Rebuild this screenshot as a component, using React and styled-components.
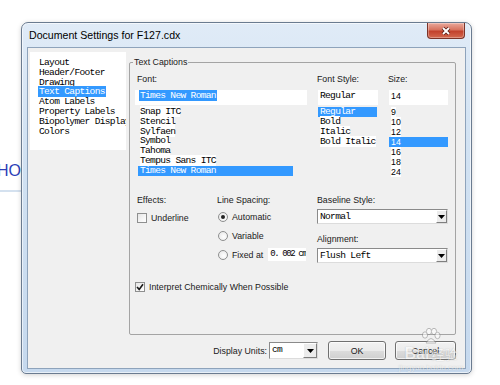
import React from "react";
import styled, { createGlobalStyle } from "styled-components";

const ui = `"Liberation Sans", Arial, sans-serif`;
const mono = `"Liberation Mono", "DejaVu Sans Mono", monospace`;
const pick = "#3399ff";

const GlobalStyle = createGlobalStyle`
  html, body { margin: 0; padding: 0; background: #ffffff; }
  body { width: 500px; height: 385px; overflow: hidden; font-family: ${ui}; }
`;

const Desktop = styled.div`
  position: relative;
  width: 500px;
  height: 385px;
  box-sizing: border-box;
  padding: 22px 0 0 21px;
`;

const PageBehind = styled.div`
  position: absolute;
  left: -3px;
  top: 161px;
  width: 26px;
  height: 29px;
  border-bottom: 2px solid #d4e1ef;
  color: #2d3fb8;
  font: 16px/20px ${ui};
`;

const Window = styled.div`
  position: relative;
  z-index: 1;
  width: 451px;
  height: 352px;
  box-sizing: border-box;
  display: flex;
  flex-direction: column;
  padding: 0 5px 4px;
  border: 1px solid #6a7b90;
  border-radius: 7px 7px 5px 5px;
  background: linear-gradient(180deg, #e0ebf7 0%, #d3e3f3 30%, #c6d9ee 100%);
  box-shadow: inset 0 0 0 1px rgba(255, 255, 255, 0.6), 0 1px 5px rgba(0, 0, 0, 0.18);
`;

const TitleBar = styled.div`
  height: 24px;
  display: flex;
  align-items: flex-start;
  justify-content: space-between;
`;

const Title = styled.span`
  padding: 6px 0 0 2px;
  font: 10.6px/12px ${ui};
  color: #000;
`;

const CloseButton = styled.div`
  width: 38px;
  height: 16px;
  margin-right: 1px;
  box-sizing: border-box;
  display: flex;
  align-items: center;
  justify-content: center;
  border: 1px solid #7b3328;
  border-top: none;
  border-radius: 0 0 4px 4px;
  background: linear-gradient(180deg, #eaa99c 0%, #d7735f 45%, #c2412c 55%, #d3694f 100%);
  box-shadow: inset 0 0 0 1px rgba(255, 255, 255, 0.3);
`;

const Client = styled.div`
  flex: 1;
  display: grid;
  grid-template-columns: 99px 1fr;
  grid-template-rows: 1fr 33px;
  padding: 4px 9px 0 2px;
  background: #f0f0f0;
  border: 1px solid #8ea3bb;
`;

const CategoryList = styled.ul`
  align-self: start;
  height: 92px;
  margin: 0 3px 0 0;
  padding: 6px 0 0 8px;
  list-style: none;
  background: #fff;
  overflow: hidden;
`;

const Row = styled.li`
  font: 9.6px/9.8px ${mono};
  letter-spacing: -0.7px;
  white-space: nowrap;
`;

const Chip = styled.span`
  padding: 0 1px;
  background: ${(p) => (p.$on ? pick : "transparent")};
  color: ${(p) => (p.$on ? "#fff" : "#000")};
`;

const Group = styled.fieldset`
  min-width: 0;
  margin: 5px 0 0;
  padding: 7px 0 0 5px;
  border: 1px solid #a4a4a4;
  border-radius: 2px;
`;

const Legend = styled.legend`
  margin-left: -2px;
  padding: 0 1px;
  font: 8.8px/10px ${ui};
  color: #1a1a1a;
`;

const FontRow = styled.div`
  display: flex;
  gap: 10px;
  align-items: flex-start;
`;

const Column = styled.div`
  width: ${(p) => p.$w}px;
  display: flex;
  flex-direction: column;
`;

const Label = styled.div`
  margin-top: ${(p) => p.$top || 0}px;
  padding-left: ${(p) => p.$indent || 0}px;
  font: 8.8px/10px ${ui};
  color: #1a1a1a;
  white-space: nowrap;
`;

const TextField = styled.div`
  height: 15px;
  margin: 6px 0 0 ${(p) => p.$shift || 0}px;
  padding: 1px 0 0 ${(p) => p.$pad}px;
  box-sizing: border-box;
  background: #fff;
  font: ${(p) => (p.$sans ? `8.8px/10px ${ui}` : `9.6px/10px ${mono}`)};
  letter-spacing: ${(p) => (p.$sans ? "0" : "-0.7px")};
  white-space: nowrap;
`;

const Picked = styled.span`
  padding: 0 1px;
  background: ${pick};
  color: #fff;
`;

const ItemList = styled.div`
  width: ${(p) => p.$w}px;
  margin: 2px 0 0 ${(p) => p.$shift}px;
  font: ${(p) => (p.$sans ? `8.8px/10px ${ui}` : `9.6px/${p.$lh || 10}px ${mono}`)};
  letter-spacing: ${(p) => (p.$sans ? "0" : "-0.7px")};
  white-space: nowrap;
`;

const Item = styled.div`
  padding-left: 2px;
  color: ${(p) => (p.$on ? "#fff" : "#000")};
  background: ${(p) => (p.$on ? pick : "transparent")};
  span {
    background: ${(p) => (p.$on ? "transparent" : "#fff")};
  }
`;

const OptionsRow = styled.div`
  display: flex;
  margin-top: 18px;
  padding-left: 2px;
`;

const CheckRow = styled.label`
  display: flex;
  align-items: center;
  gap: 4px;
  height: 10px;
  margin-top: ${(p) => p.$top}px;
  font: 8.8px/10px ${ui};
  color: #1a1a1a;
  white-space: nowrap;
`;

const CheckBox = styled.span`
  width: 10px;
  height: 10px;
  box-sizing: border-box;
  display: flex;
  align-items: center;
  justify-content: center;
  border: 1px solid #8e8f8f;
  background: linear-gradient(135deg, #e6e6e6 0%, #ffffff 100%);
`;

const RadioGroup = styled.div`
  margin-top: 2px;
  display: flex;
  flex-direction: column;
`;

const RadioRow = styled.label`
  height: 19px;
  display: flex;
  align-items: center;
  gap: 4px;
  padding-left: 1px;
  font: 8.8px/10px ${ui};
  color: #1a1a1a;
  white-space: nowrap;
`;

const RadioDot = styled.span`
  width: 10px;
  height: 10px;
  box-sizing: border-box;
  display: flex;
  align-items: center;
  justify-content: center;
  border: 1px solid #8e8f8f;
  border-radius: 50%;
  background: radial-gradient(circle at 60% 60%, #ffffff 0%, #e4e4e4 100%);
  &::after {
    content: "";
    width: 4px;
    height: 4px;
    border-radius: 50%;
    background: ${(p) => (p.$on ? "#222" : "transparent")};
  }
`;

const NumberField = styled.span`
  width: 38px;
  height: 13px;
  margin-left: 1px;
  padding-left: 2px;
  box-sizing: border-box;
  overflow: hidden;
  background: #fff;
  font: 9px/13px ${mono};
  letter-spacing: -1.4px;
  color: #000;
`;

const Select = styled.div`
  width: ${(p) => p.$w}px;
  height: ${(p) => p.$h || 15}px;
  margin-top: ${(p) => p.$top || 0}px;
  box-sizing: border-box;
  display: flex;
  align-items: stretch;
  border: 1px solid;
  border-color: #8a8a8a #dcdcdc #dcdcdc #8a8a8a;
  background: #fff;
`;

const SelectText = styled.span`
  flex: 1;
  padding-left: 2px;
  font: 9.6px/13px ${mono};
  letter-spacing: -0.7px;
  color: #000;
  white-space: nowrap;
  overflow: hidden;
`;

const ArrowButton = styled.span`
  width: ${(p) => p.$w || 11}px;
  box-sizing: border-box;
  display: flex;
  align-items: center;
  justify-content: center;
  background: #ececec;
  border: 1px solid;
  border-color: #ffffff #7f7f7f #7f7f7f #ffffff;
`;

const ButtonBar = styled.div`
  grid-column: 1 / -1;
  display: flex;
  align-items: center;
  justify-content: flex-end;
  padding-bottom: 2px;
`;

const BarLabel = styled.span`
  margin-right: 2px;
  font: 8.8px/10px ${ui};
  color: #1a1a1a;
`;

const Button = styled.div`
  width: ${(p) => p.$w}px;
  height: 19px;
  margin-left: ${(p) => p.$gap}px;
  box-sizing: border-box;
  display: flex;
  align-items: center;
  justify-content: center;
  border: 1px solid #707070;
  border-radius: 3px;
  background: linear-gradient(180deg, #f2f2f2 0%, #ebebeb 50%, #dddddd 50%, #cfcfcf 100%);
  box-shadow: inset 0 0 0 1px rgba(255, 255, 255, 0.7);
  font: 8.8px/10px ${ui};
  color: #1a1a1a;
`;

const Watermark = styled.div`
  position: absolute;
  left: 384px;
  top: 328px;
  z-index: 2;
  width: 94px;
  display: flex;
  flex-direction: column;
  align-items: center;
  pointer-events: none;
  opacity: 0.55;
  color: #ffffff;
  text-shadow: 0 0 1px rgba(110, 110, 110, 0.8);
`;

const MarkLine = styled.div`
  display: flex;
  align-items: center;
  gap: 2px;
  font: bold 16px/18px ${ui};
  span {
    font: 13px/18px "Noto Sans CJK SC", sans-serif;
  }
`;

const MarkSite = styled.div`
  font: 8px/9px ${ui};
`;

function Arrow() {
  return (
    <svg width="7" height="4" viewBox="0 0 7 4">
      <polygon points="0,0 7,0 3.5,4" fill="#000" />
    </svg>
  );
}

function Tick() {
  return (
    <svg width="8" height="8" viewBox="0 0 8 8">
      <path d="M1 4 L3.2 6.4 L7 1.3" fill="none" stroke="#1a1a1a" strokeWidth="1.6" />
    </svg>
  );
}

function Paw() {
  return (
    <svg width="20" height="17" viewBox="0 0 20 17" fill="#ffffff" stroke="#8a8a8a">
      <ellipse cx="4" cy="7" rx="2.6" ry="3.2" />
      <ellipse cx="8" cy="3.5" rx="2.6" ry="3.2" />
      <ellipse cx="13" cy="3.5" rx="2.6" ry="3.2" />
      <ellipse cx="16.5" cy="7.5" rx="2.6" ry="3.2" />
      <path d="M5 15 Q10 6 15 15 Z" />
    </svg>
  );
}

const categories = [
  "Layout",
  "Header/Footer",
  "Drawing",
  "Text Captions",
  "Atom Labels",
  "Property Labels",
  "Biopolymer Display",
  "Colors",
];
const fonts = ["Snap ITC", "Stencil", "Sylfaen", "Symbol", "Tahoma", "Tempus Sans ITC", "Times New Roman"];
const styles = ["Regular", "Bold", "Italic", "Bold Italic"];
const sizes = ["9", "10", "12", "14", "16", "18", "24"];

export default function App() {
  return (
    <Desktop>
      <GlobalStyle />
      <PageBehind>HO</PageBehind>
      <Window>
        <TitleBar>
          <Title>Document Settings for F127.cdx</Title>
          <CloseButton>
            <svg width="12" height="10" viewBox="0 0 12 10">
              <path d="M3 2 L9 8 M9 2 L3 8" stroke="#5a1d15" strokeWidth="3.6" />
              <path d="M3 2 L9 8 M9 2 L3 8" stroke="#ffffff" strokeWidth="1.9" />
            </svg>
          </CloseButton>
        </TitleBar>
        <Client>
          <CategoryList>
            {categories.map((c) => (
              <Row key={c}>
                <Chip $on={c === "Text Captions"}>{c}</Chip>
              </Row>
            ))}
          </CategoryList>

          <Group>
            <Legend>Text Captions</Legend>
            <FontRow>
              <Column $w={172}>
                <Label $indent={2}>Font:</Label>
                <TextField $pad={4}>
                  <Picked>Times New Roman</Picked>
                </TextField>
                <ItemList $w={155} $shift={3} $lh={9.8}>
                  {fonts.map((f) => (
                    <Item key={f} $on={f === "Times New Roman"}>
                      <span>{f}</span>
                    </Item>
                  ))}
                </ItemList>
              </Column>
              <Column $w={61}>
                <Label>Font Style:</Label>
                <TextField $pad={2} $shift={1}>Regular</TextField>
                <ItemList $w={59} $shift={1}>
                  {styles.map((s) => (
                    <Item key={s} $on={s === "Regular"}>
                      <span>{s}</span>
                    </Item>
                  ))}
                </ItemList>
              </Column>
              <Column $w={60}>
                <Label>Size:</Label>
                <TextField $pad={2} $shift={1} $sans>14</TextField>
                <ItemList $w={59} $shift={1} $sans>
                  {sizes.map((s) => (
                    <Item key={s} $on={s === "14"}>
                      <span>{s}</span>
                    </Item>
                  ))}
                </ItemList>
              </Column>
            </FontRow>

            <OptionsRow>
              <Column $w={80}>
                <Label>Effects:</Label>
                <CheckRow $top={8}>
                  <CheckBox />
                  Underline
                </CheckRow>
              </Column>
              <Column $w={100}>
                <Label>Line Spacing:</Label>
                <RadioGroup>
                  <RadioRow>
                    <RadioDot $on />
                    Automatic
                  </RadioRow>
                  <RadioRow>
                    <RadioDot />
                    Variable
                  </RadioRow>
                  <RadioRow>
                    <RadioDot />
                    Fixed at
                    <NumberField>0. 002 cm</NumberField>
                  </RadioRow>
                </RadioGroup>
              </Column>
              <Column $w={131}>
                <Label>Baseline Style:</Label>
                <Select $w={131} $top={4}>
                  <SelectText>Normal</SelectText>
                  <ArrowButton>
                    <Arrow />
                  </ArrowButton>
                </Select>
                <Label $top={10}>Alignment:</Label>
                <Select $w={131} $top={4}>
                  <SelectText>Flush Left</SelectText>
                  <ArrowButton>
                    <Arrow />
                  </ArrowButton>
                </Select>
              </Column>
            </OptionsRow>

            <CheckRow $top={18}>
              <CheckBox>
                <Tick />
              </CheckBox>
              Interpret Chemically When Possible
            </CheckRow>
          </Group>

          <ButtonBar>
            <BarLabel>Display Units:</BarLabel>
            <Select $w={49} $h={17}>
              <SelectText>cm</SelectText>
              <ArrowButton $w={14}>
                <Arrow />
              </ArrowButton>
            </Select>
            <Button $w={58} $gap={10}>OK</Button>
            <Button $w={61} $gap={9}>Cancel</Button>
          </ButtonBar>
        </Client>
      </Window>
      <Watermark>
        <Paw />
        <MarkLine>
          Bai<span>经验</span>
        </MarkLine>
        <MarkSite>jingyan.baidu.com</MarkSite>
      </Watermark>
    </Desktop>
  );
}
